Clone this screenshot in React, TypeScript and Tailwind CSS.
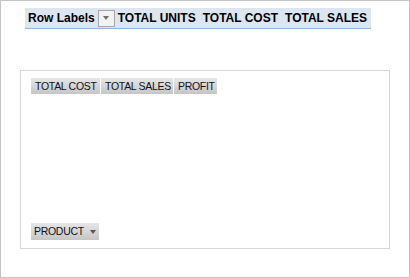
const headers = [
  { label: "TOTAL UNITS", ml: "ml-[3px]" },
  { label: "TOTAL COST", ml: "ml-[7px]" },
  { label: "TOTAL SALES", ml: "ml-[7px]" },
];
const fields = [
  { label: "TOTAL COST", w: "w-[69px]" },
  { label: "TOTAL SALES", w: "w-[72px]" },
  { label: "PROFIT", w: "w-[43px]" },
];

const FieldButton = ({ label, w }: { label: string; w: string }) => (
  <div
    className={`${w} h-4 shrink-0 flex items-center px-[4px] whitespace-nowrap bg-gradient-to-b from-[#e6e6e6] to-[#c6c6c6] text-[10.5px] tracking-[-0.3px] leading-none text-[#101020]`}
  >
    {label}
  </div>
);

export default function App() {
  return (
    <div className="w-[410px] h-[278px] border border-[#c4c4c4] bg-white font-['Liberation_Sans',Arial,sans-serif] flex flex-col">
      <div className="ml-[24px] mt-[7px] w-[346px] h-[21px] flex items-center whitespace-nowrap bg-[#dce6f1] border-b border-[#95b3d7] text-[12px] font-bold text-black">
        <span className="ml-[3px] shrink-0">Row Labels</span>
        <div className="ml-[3px] shrink-0 w-[17px] h-[17px] border border-[#a6a6a6] bg-[#f2f2f2] flex items-center justify-center">
          <div className="w-0 h-0 border-l-[3.5px] border-r-[3.5px] border-t-[4px] border-l-transparent border-r-transparent border-t-[#707070]" />
        </div>
        {headers.map((h) => (
          <span key={h.label} className={`${h.ml} shrink-0`}>
            {h.label}
          </span>
        ))}
      </div>
      <div className="ml-[19px] mt-[41px] w-[370px] h-[179px] border border-[#d6d6d6] flex flex-col items-start justify-between pl-[10px] pt-[7px] pb-[8px]">
        <div className="flex gap-px">
          {fields.map((f) => (
            <FieldButton key={f.label} {...f} />
          ))}
        </div>
        <div className="w-[68px] h-[17px] flex items-center whitespace-nowrap px-[3px] bg-gradient-to-b from-[#e6e6e6] to-[#c6c6c6] text-[10.5px] tracking-[-0.3px] leading-none text-[#101020]">
          PRODUCT
          <div className="ml-[6px] w-0 h-0 border-l-[3.5px] border-r-[3.5px] border-t-[4px] border-l-transparent border-r-transparent border-t-[#555]" />
        </div>
      </div>
    </div>
  );
}
